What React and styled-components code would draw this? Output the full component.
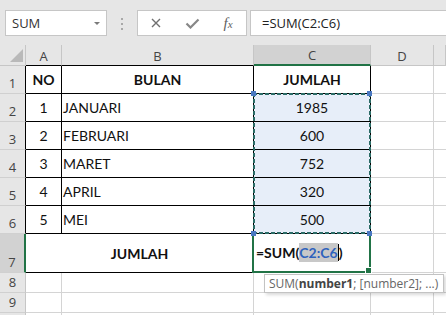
import React from "react";
import styled, { createGlobalStyle } from "styled-components";

const GlobalStyle = createGlobalStyle`
  html, body {
    margin: 0;
    padding: 0;
    background: #fff;
  }
  body {
    overflow: hidden;
  }
`;

const Window = styled.div`
  width: 446px;
  height: 315px;
  overflow: hidden;
  display: flex;
  flex-direction: column;
  font-family: "Open Sans", "Noto Sans", sans-serif;
`;

const FormulaBar = styled.div`
  flex: none;
  height: 45px;
  box-sizing: border-box;
  background: #e6e6e6;
  display: flex;
  align-items: flex-start;
  padding: 10px 0 0 5px;
`;

const NameBox = styled.div`
  width: 102px;
  height: 26px;
  box-sizing: border-box;
  background: #fff;
  border: 1px solid #c6c6c6;
  display: flex;
  align-items: center;
  justify-content: space-between;
  padding: 0 6px;
  font-size: 13px;
  color: #333;
`;

const DropArrow = styled.span`
  width: 0;
  height: 0;
  border-left: 3px solid transparent;
  border-right: 3px solid transparent;
  border-top: 3px solid #7a7a7a;
`;

const Grip = styled.div`
  width: 30px;
  display: flex;
  flex-direction: column;
  align-items: center;
  gap: 3px;
  padding-top: 8px;
`;

const GripDot = styled.span`
  width: 2px;
  height: 2px;
  background: #a8a8a8;
`;

const IconGroup = styled.div`
  width: 110px;
  height: 26px;
  box-sizing: border-box;
  background: #fff;
  border: 1px solid #c6c6c6;
  display: flex;
  align-items: center;
`;

const IconSlot = styled.div`
  width: 36px;
  display: flex;
  justify-content: center;
  align-items: center;
`;

const Fx = styled.span`
  font-family: "Liberation Serif", serif;
  font-style: italic;
  font-size: 15px;
  color: #5f5f5f;
  line-height: 1;

  small {
    font-size: 11px;
  }
`;

const FormulaInput = styled.div`
  flex: 1;
  margin-left: 3px;
  height: 26px;
  box-sizing: border-box;
  background: #fff;
  border: 1px solid #c6c6c6;
  border-right: none;
  display: flex;
  align-items: center;
  padding-left: 11px;
  font-size: 13px;
  color: #222;
`;

const Sheet = styled.div`
  flex: 1;
  display: grid;
  grid-template-columns: 26px 36px 192px 117px 63px 1fr;
  grid-template-rows: 21px repeat(6, 28px) 39px 20px 20px 1fr;
  background: #fff;
`;

const Corner = styled.div`
  grid-area: 1 / 1;
  background: #e6e6e6;
  border-right: 1px solid #c6c6c6;
  border-bottom: 1px solid #c6c6c6;
  display: flex;
  align-items: flex-end;
  justify-content: flex-end;
  padding: 0 2px 3px 0;
`;

const ColHead = styled.div`
  grid-row: 1;
  grid-column: ${(p) => p.$col};
  background: ${(p) => (p.$active ? "#d2d2d2" : "#e6e6e6")};
  border-right: 1px solid #c6c6c6;
  border-bottom: ${(p) => p.$bw || 1}px solid ${(p) => p.$line || "#c6c6c6"};
  display: flex;
  align-items: center;
  justify-content: center;
  font-size: 13px;
  color: #444;
  padding-top: 1px;
`;

const RowHead = styled.div`
  grid-row: ${(p) => p.$row};
  grid-column: 1;
  background: ${(p) => (p.$active ? "#d2d2d2" : "#e6e6e6")};
  border-right: ${(p) => p.$rw || 1}px solid ${(p) => p.$line || "#c6c6c6"};
  border-bottom: 1px solid #d0d0d0;
  display: flex;
  align-items: flex-end;
  justify-content: center;
  font-size: 13px;
  line-height: 1;
  color: #444;
  padding-bottom: 3px;
  box-sizing: border-box;
`;

const Cell = styled.div`
  grid-row: ${(p) => p.$row};
  grid-column: ${(p) => p.$col};
  background: ${(p) => p.$bg || "#fff"};
  border-right: ${(p) => (p.$noRight ? "none" : `1px solid ${p.$r || "#d4d4d4"}`)};
  border-bottom: 1px solid ${(p) => p.$b || "#d4d4d4"};
  display: flex;
  align-items: center;
  justify-content: ${(p) => (p.$left ? "flex-start" : "center")};
  padding: 0 1px;
  font-family: Lato, "Liberation Sans", sans-serif;
  font-size: 14px;
  font-weight: ${(p) => (p.$bold ? 700 : 400)};
  color: #111;
  white-space: nowrap;
`;

const Marquee = styled.div`
  grid-column: 4;
  grid-row: 3 / 8;
  margin: -1px 0 0 -1px;
  position: relative;
  z-index: 3;
  pointer-events: none;
  background:
    repeating-linear-gradient(90deg, #2b6b66 0 4px, transparent 4px 6px) top / 100% 2px no-repeat,
    repeating-linear-gradient(90deg, #2b6b66 0 4px, transparent 4px 6px) bottom / 100% 2px no-repeat,
    repeating-linear-gradient(180deg, #2b6b66 0 4px, transparent 4px 6px) left / 2px 100% no-repeat,
    repeating-linear-gradient(180deg, #2b6b66 0 4px, transparent 4px 6px) right / 2px 100% no-repeat;
`;

const Handle = styled.span`
  position: absolute;
  width: 5px;
  height: 5px;
  background: #4a78c2;
  ${(p) => (p.$x === "left" ? "left: -2px;" : "right: -1px;")}
  ${(p) => (p.$y === "top" ? "top: -2px;" : "bottom: -2px;")}
`;

const ActiveCell = styled.div`
  grid-column: 4;
  grid-row: 8 / 9;
  margin: -1px 0 0 -2px;
  position: relative;
  z-index: 2;
  border: 2px solid #217346;
  border-top: none;
  display: flex;
  align-items: center;
  padding-left: 2px;
  font-family: Lato, "Liberation Sans", sans-serif;
  font-size: 14px;
  font-weight: 700;
  color: #111;
  white-space: nowrap;
`;

const Ref = styled.span`
  display: inline-block;
  line-height: 19px;
  background: #c8c8c8;
  color: #2f62bd;
`;

const Caret = styled.span`
  display: inline-block;
  width: 1px;
  height: 17px;
  background: #000;
`;

const FillHandle = styled.span`
  position: absolute;
  right: -3px;
  bottom: -3px;
  width: 5px;
  height: 5px;
  background: #217346;
  border: 1px solid #fff;
`;

const Tip = styled.div`
  position: absolute;
  left: 10px;
  top: calc(100% + 3px);
  background: #fff;
  border: 1px solid #c3c3c3;
  box-shadow: 2px 2px 3px rgba(0, 0, 0, 0.15);
  padding: 0 5px 0 4px;
  height: 19px;
  box-sizing: border-box;
  display: flex;
  align-items: center;
  font-family: "Open Sans", sans-serif;
  font-size: 12px;
  font-weight: 400;
  color: #666;

  strong {
    color: #444;
    font-weight: 700;
  }
`;

const rows = [
  { n: 1, a: "NO", b: "BULAN", c: "JUMLAH", head: true },
  { n: 2, a: "1", b: "JANUARI", c: "1985" },
  { n: 3, a: "2", b: "FEBRUARI", c: "600" },
  { n: 4, a: "3", b: "MARET", c: "752" },
  { n: 5, a: "4", b: "APRIL", c: "320" },
  { n: 6, a: "5", b: "MEI", c: "500" },
];

const TableRow = ({ row }) => {
  const r = row.n + 1;
  return (
    <>
      <RowHead $row={r} $line="#000">{row.n}</RowHead>
      <Cell $row={r} $col={2} $r="#000" $b="#000" $bold={row.head}>
        {row.a}
      </Cell>
      <Cell $row={r} $col={3} $r="#000" $b="#000" $bold={row.head} $left={!row.head}>
        {row.b}
      </Cell>
      <Cell
        $row={r}
        $col={4}
        $r="#000"
        $b="#000"
        $bold={row.head}
        $bg={row.head ? "#fff" : "#e7eef9"}
      >
        {row.c}
      </Cell>
      <Cell $row={r} $col={5} />
      <Cell $row={r} $col={6} $noRight />
    </>
  );
};

// label is empty for the partly visible last row
const EmptyRow = ({ n, label, last }) => {
  const r = n + 1;
  const b = last ? "transparent" : undefined;
  return (
    <>
      <RowHead $row={r}>{label}</RowHead>
      <Cell $row={r} $col={2} $b={b} />
      <Cell $row={r} $col={3} $b={b} />
      <Cell $row={r} $col={4} $b={b} />
      <Cell $row={r} $col={5} $b={b} />
      <Cell $row={r} $col={6} $b={b} $noRight />
    </>
  );
};

const App = () => {
  return (
    <Window>
      <GlobalStyle />
      <FormulaBar>
        <NameBox>
          SUM
          <DropArrow />
        </NameBox>
        <Grip>
          <GripDot />
          <GripDot />
          <GripDot />
        </Grip>
        <IconGroup>
          <IconSlot>
            <svg width="10" height="10" viewBox="0 0 10 10">
              <path d="M1 1 L9 9 M9 1 L1 9" stroke="#707070" strokeWidth="1.4" fill="none" />
            </svg>
          </IconSlot>
          <IconSlot>
            <svg width="15" height="11" viewBox="0 0 15 11">
              <path d="M1.5 5.5 L5.5 9.5 L13.5 1.5" stroke="#878787" strokeWidth="2.2" fill="none" />
            </svg>
          </IconSlot>
          <IconSlot>
            <Fx>
              f<small>x</small>
            </Fx>
          </IconSlot>
        </IconGroup>
        <FormulaInput>=SUM(C2:C6)</FormulaInput>
      </FormulaBar>

      <Sheet>
        <Corner>
          <svg width="13" height="13" viewBox="0 0 13 13">
            <path d="M13 0 L13 13 L0 13 Z" fill="#b9b9b9" />
          </svg>
        </Corner>
        <ColHead $col={2} $line="#000">A</ColHead>
        <ColHead $col={3} $line="#000">B</ColHead>
        <ColHead $col={4} $active $line="#217346" $bw={2}>C</ColHead>
        <ColHead $col={5}>D</ColHead>
        <ColHead $col={6} />

        {rows.map((row) => (
          <TableRow key={row.n} row={row} />
        ))}

        <RowHead $row={8} $active $line="#217346" $rw={2}>7</RowHead>
        <Cell $row={8} $col="2 / 4" $r="#000" $b="#000" $bold>
          JUMLAH
        </Cell>
        <Cell $row={8} $col={4} $r="#000" $b="#000" />
        <Cell $row={8} $col={5} />
        <Cell $row={8} $col={6} $noRight />

        <EmptyRow n={8} label="8" />
        <EmptyRow n={9} label="9" />
        <EmptyRow n={10} last />

        <Marquee>
          <Handle $x="left" $y="top" />
          <Handle $x="right" $y="top" />
          <Handle $x="left" $y="bottom" />
          <Handle $x="right" $y="bottom" />
        </Marquee>

        <ActiveCell>
          =SUM(<Ref>C2:C6</Ref>
          <Caret />)
          <FillHandle />
          <Tip>
            SUM(<strong>number1</strong>; [number2]; ...)
          </Tip>
        </ActiveCell>
      </Sheet>
    </Window>
  );
};

export default App;
